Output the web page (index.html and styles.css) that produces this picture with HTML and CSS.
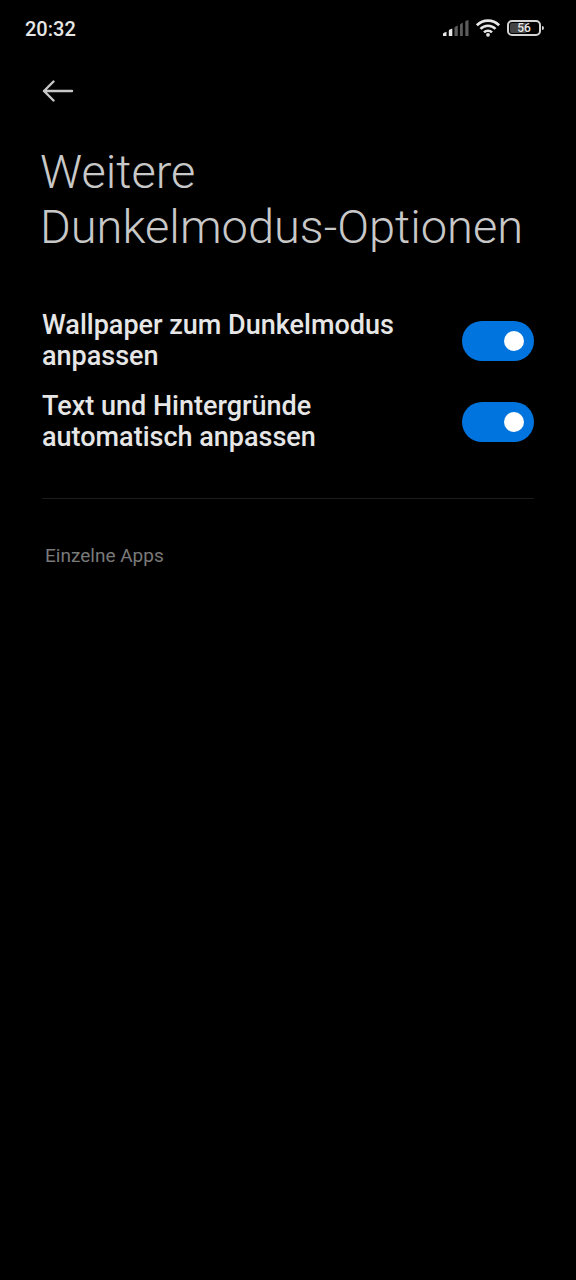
FILE: index.html
```html
<!DOCTYPE html>
<html lang="de">
<head>
<meta charset="utf-8">
<meta name="viewport" content="width=device-width, initial-scale=1">
<title>Weitere Dunkelmodus-Optionen</title>
<link rel="stylesheet" href="styles.css">
</head>
<body>
<header class="status">
  <time class="clock">20:32</time>
  <div class="indicators">
    <svg class="signal" width="26" height="16" viewBox="0 0 26 16" aria-hidden="true">
      <path fill="#e6e6e6" d="M0 14q0-1 1-1.300l2.500-1V16H0zM5.800 11q0-1 1-1.400l2.500-1.100V16H5.800z"/>
      <path fill="#5c5c5c" d="M11.500 8q0-1 .8-1.300l2.500-1.100V16h-3.300zM17 5q0-1 .8-1.300l2-1V16H17zM22.300 2q0-1 .8-1.300L25.500 0v16h-3.200z"/>
    </svg>
    <svg class="wifi" width="24" height="18" viewBox="0 0 24 18" fill="none" stroke="#e6e6e6" stroke-width="2.600" aria-hidden="true">
      <path d="M.9 6.300a15.600 15.600 0 0 1 22.200 0M4.500 9.900a10.400 10.400 0 0 1 15 0M8 13.400a5.600 5.600 0 0 1 8 0"/>
      <circle cx="12" cy="15.800" r="1.900" fill="#e6e6e6" stroke="none"/>
    </svg>
    <div class="battery"><span class="level">56</span></div>
  </div>
</header>
<main class="page">
  <button class="back" type="button" aria-label="Zurück">
    <svg width="32" height="22" viewBox="0 0 32 22" fill="none" stroke="#c8c8c8" stroke-width="2.400" stroke-linecap="round" stroke-linejoin="round" aria-hidden="true"><path d="M30 11H2M11.500 1.500L2 11l9.500 9.500"/></svg>
  </button>
  <h1 class="title">Weitere <span class="whole">Dunkelmodus-Optionen</span></h1>
  <section class="options">
    <div class="option">
      <label class="label" for="wallpaper">Wallpaper zum Dunkelmodus anpassen</label>
      <input class="switch" id="wallpaper" type="checkbox" role="switch" checked>
    </div>
    <div class="option">
      <label class="label" for="text">Text und Hintergründe automatisch anpassen</label>
      <input class="switch" id="text" type="checkbox" role="switch" checked>
    </div>
  </section>
  <h2 class="subhead">Einzelne Apps</h2>
</main>
</body>
</html>
```
FILE: styles.css
```css
* { box-sizing: border-box; }
body {
  margin: 0;
  min-height: 100vh;
  background: #000;
  color: #e6e6e6;
  font-family: Roboto, "Noto Sans", sans-serif;
}
.status {
  display: flex;
  align-items: center;
  justify-content: space-between;
  height: 56px;
  padding: 0 35px 0 25px;
}
.clock { font-size: 20px; line-height: 24px; font-weight: 500; padding-top: 2px; }
.indicators { display: flex; align-items: center; gap: 7px; }
.battery {
  position: relative;
  width: 34px;
  height: 16px;
  padding: 1px;
  border: 2px solid #d4d4d4;
  border-radius: 5px;
}
.battery::after {
  content: "";
  position: absolute;
  top: 4px;
  right: -5px;
  width: 2px;
  height: 4px;
  border-radius: 0 2px 2px 0;
  background: #d4d4d4;
}
.level {
  display: block;
  border-radius: 2px;
  background: linear-gradient(90deg, #444 56%, transparent 56%);
  font-size: 12px;
  line-height: 10px;
  font-weight: 500;
  text-align: center;
}
.page { padding: 24px 42px; }
.back {
  display: block;
  padding: 0;
  border: 0;
  background: none;
}
.back svg { display: block; }
.title {
  margin: 42px -2px 0;
  font-size: 47px;
  line-height: 55px;
  font-weight: 300;
  color: #c8c8c8;
}
.whole { white-space: nowrap; }
.options {
  display: grid;
  gap: 19px;
  padding: 56px 0 45px;
  border-bottom: 1px solid #1c1c1c;
}
.option {
  display: flex;
  align-items: center;
  justify-content: space-between;
  gap: 48px;
}
.label {
  font-size: 27px;
  line-height: 31px;
  font-weight: 500;
  max-width: 360px;
}
.switch {
  appearance: none;
  flex: none;
  display: flex;
  align-items: center;
  justify-content: flex-end;
  width: 72px;
  height: 40px;
  margin: 0;
  padding: 0 10px;
  border-radius: 20px;
  background: #333;
}
.switch:checked { background: #0074de; }
.switch::before {
  content: "";
  width: 20px;
  height: 20px;
  border-radius: 50%;
  background: #fff;
}
.subhead {
  margin: 45px 3px 0;
  font-size: 19px;
  line-height: 24px;
  font-weight: 400;
  color: #7a7a7a;
}
```
